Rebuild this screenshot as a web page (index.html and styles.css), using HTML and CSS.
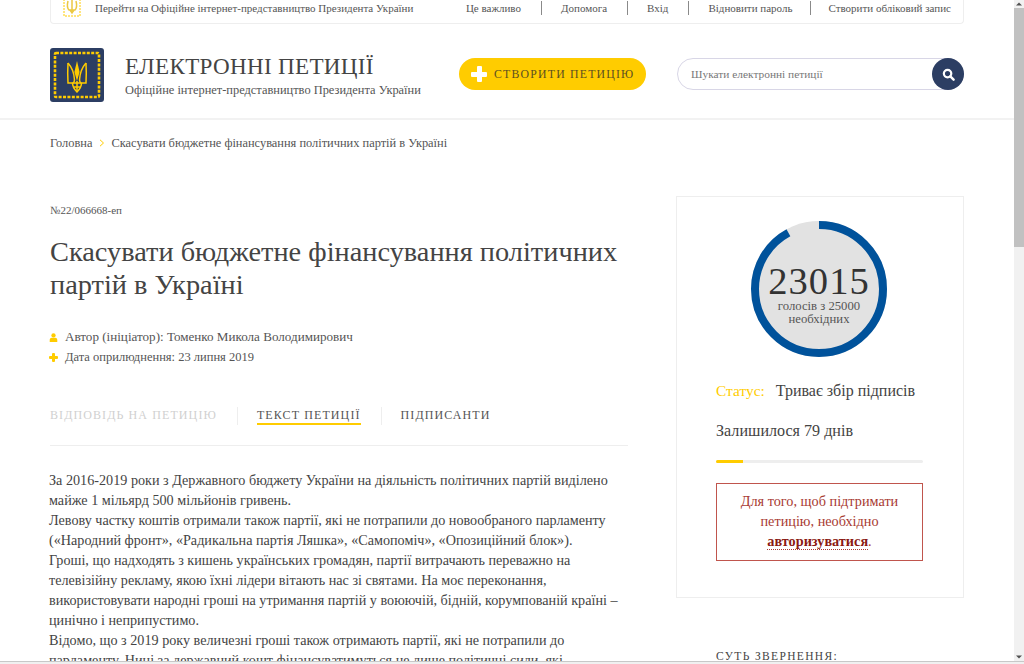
FILE: index.html
```html
<!DOCTYPE html>
<html lang="uk">
<head>
<meta charset="utf-8">
<title>Скасувати бюджетне фінансування політичних партій в Україні</title>
<link rel="stylesheet" href="styles.css">
</head>
<body>
<div class="window">
  <div class="page">
    <div class="container">
      <div class="topbar">
        <a class="topbar-home">
          <svg class="mini-logo" viewBox="0 0 18 17" aria-hidden="true">
            <path class="mini-frame" d="M1 -4V16H17V-4"/>
            <path class="mini-trident" d="M9 0V12M5 1C4 5 4 8 6 10H12C14 8 14 5 13 1M7 10L9 13L11 10"/>
          </svg>
          <span>Перейти на Офіційне інтернет-представництво Президента України</span>
        </a>
        <nav class="topnav">
          <a>Це важливо</a>
          <a>Допомога</a>
          <a>Вхід</a>
          <a>Відновити пароль</a>
          <a>Створити обліковий запис</a>
        </nav>
      </div>
    </div>

    <header class="header">
      <div class="container header-row">
        <svg class="logo" viewBox="0 0 54 54" aria-hidden="true">
          <rect width="54" height="54" rx="3" fill="#2c3e63"/>
          <rect class="logo-frame" x="5" y="5" width="44" height="44" rx="1"/>
          <g class="logo-trident">
            <path class="logo-lance" d="M27 13L29.6 24L27 33L24.4 24Z"/>
            <path d="M18 15C17.6 22 17.6 29 18 35H36C36.4 29 36.4 22 36 15"/>
            <path d="M18 15C21.5 19 24 25 24.4 31C24.6 33 24 35 22.5 35M36 15C32.5 19 30 25 29.6 31C29.4 33 30 35 31.5 35"/>
            <path d="M22.5 35C22.5 39 25 42 27 44C29 42 31.5 39 31.5 35"/>
            <path d="M23.5 39H30.5M27 33V44"/>
          </g>
        </svg>
        <div class="brand">
          <div class="brand-title">ЕЛЕКТРОННІ ПЕТИЦІЇ</div>
          <div class="brand-sub">Офіційне інтернет-представництво Президента України</div>
        </div>
        <a class="create-btn"><span class="plus plus-lg"></span>СТВОРИТИ ПЕТИЦІЮ</a>
        <div class="search">
          <span class="search-text">Шукати електронні петиції</span>
          <span class="search-btn">
            <svg viewBox="0 0 14 14" width="13" height="13" aria-hidden="true">
              <circle cx="6" cy="6" r="4" fill="none" stroke="#fff" stroke-width="2.4"/>
              <path d="M9 9L12.5 12.5" stroke="#fff" stroke-width="2.6" stroke-linecap="round"/>
            </svg>
          </span>
        </div>
      </div>
    </header>

    <div class="container">
      <div class="crumbs">
        <a>Головна</a>
        <svg class="crumb-arrow" viewBox="0 0 6 8" aria-hidden="true"><path d="M1 .8L4.5 4L1 7.2"/></svg>
        <span>Скасувати бюджетне фінансування політичних партій в Україні</span>
      </div>

      <div class="columns">
        <main class="main">
          <div class="number">№22/066668-еп</div>
          <h1 class="title">Скасувати бюджетне фінансування політичних партій в Україні</h1>
          <div class="meta">
            <div class="meta-row">
              <svg class="meta-icon" viewBox="0 0 10 10" aria-hidden="true">
                <circle cx="5" cy="2.7" r="2.4" fill="#fc0"/>
                <path d="M.8 10V7.8C.8 6.2 2 5.4 3 5.4H7C8 5.4 9.2 6.2 9.2 7.8V10Z" fill="#fc0"/>
              </svg>
              <span>Автор (ініціатор): Томенко Микола Володимирович</span>
            </div>
            <div class="meta-row meta-date">
              <span class="meta-icon plus plus-sm"></span>
              <span>Дата оприлюднення: 23 липня 2019</span>
            </div>
          </div>
          <div class="tabs">
            <a class="tab tab-muted">ВІДПОВІДЬ НА ПЕТИЦІЮ</a>
            <a class="tab tab-active">ТЕКСТ ПЕТИЦІЇ</a>
            <a class="tab">ПІДПИСАНТИ</a>
          </div>
          <div class="article">
            За 2016-2019 роки з Державного бюджету України на діяльність політичних партій виділено<br>
            майже 1 мільярд 500 мільйонів гривень.<br>
            Левову частку коштів отримали також партії, які не потрапили до новообраного парламенту<br>
            («Народний фронт», «Радикальна партія Ляшка», «Самопоміч», «Опозиційний блок»).<br>
            Гроші, що надходять з кишень українських громадян, партії витрачають переважно на<br>
            телевізійну рекламу, якою їхні лідери вітають нас зі святами. На моє переконання,<br>
            використовувати народні гроші на утримання партій у воюючій, бідній, корумпованій країні –<br>
            цинічно і неприпустимо.<br>
            Відомо, що з 2019 року величезні гроші також отримають партії, які не потрапили до<br>
            парламенту. Нині за державний кошт фінансуватимуться не лише політичні сили, які
          </div>
        </main>

        <aside class="side">
          <div class="card">
            <div class="gauge">
              <svg class="gauge-ring" viewBox="0 0 136 136" aria-hidden="true">
                <circle cx="68" cy="68" r="68" fill="#e2e2e2"/>
                <circle class="gauge-arc" cx="68" cy="68" r="64" pathLength="100" stroke-dasharray="92.06 100" transform="rotate(-90 68 68)"/>
              </svg>
              <div class="gauge-text">
                <div class="gauge-num">23015</div>
                <div class="gauge-label">голосів з 25000<br>необхідних</div>
              </div>
            </div>
            <div class="status"><span class="status-key">Статус:</span><span>Триває збір підписів</span></div>
            <div class="remain">Залишилося 79 днів</div>
            <div class="bar"><div class="bar-fill"></div></div>
            <div class="notice">Для того, щоб підтримати петицію, необхідно <a class="notice-link">авторизуватися</a>.</div>
          </div>
          <div class="side-heading">СУТЬ ЗВЕРНЕННЯ:</div>
        </aside>
      </div>
    </div>
  </div>
  <div class="scrollbar">
    <svg class="sb-arrow" viewBox="0 0 10 8" aria-hidden="true"><path d="M5 2.5L8 5.5H2Z"/></svg>
    <div class="sb-thumb"></div>
    <div class="sb-track"></div>
    <svg class="sb-arrow" viewBox="0 0 10 8" aria-hidden="true"><path d="M5 5.5L8 2.5H2Z"/></svg>
  </div>
</div>
</body>
</html>
```

FILE: styles.css
```css
* { box-sizing: border-box; }
html, body { margin: 0; height: 664px; overflow: hidden; background: #f0f0f0; }
body { font-family: "Liberation Serif", "Noto Sans CJK SC", serif; color: #444; }

.window { display: flex; height: 661px; overflow: hidden; background: #fff; box-shadow: 0 1px 0 #c8c8c8; }
.page { width: 1014px; flex: none; overflow: hidden; }
.container { width: 914px; margin-left: 50px; }

.scrollbar { width: 10px; flex: none; display: flex; flex-direction: column; background: #f1f1f1; }
.sb-arrow { display: block; width: 10px; height: 8px; flex: none; fill: #505050; }
.sb-thumb { height: 239px; background: #c1c1c1; flex: none; }
.sb-track { flex: 1; }

.topbar { height: 24px; display: flex; justify-content: space-between; border: 1px solid #eee; border-top: 0; border-radius: 0 0 4px 4px; font-size: 11px; color: #555; white-space: nowrap; }
.topbar-home { display: flex; gap: 14px; margin-left: 12px; height: 17px; align-items: center; padding-bottom: 2px; }
.mini-logo { width: 18px; height: 17px; flex: none; margin-bottom: -2px; }
.mini-frame { fill: none; stroke: #fc0; stroke-width: 1; stroke-dasharray: 2 1; }
.mini-trident { fill: none; stroke: #ebc843; stroke-width: 1.5; }
.topnav { display: flex; height: 15px; margin-right: 12px; align-items: center; }
.topnav a { padding: 0 19.5px; line-height: 14px; border-left: 1px solid #8a8a8a; }
.topnav a:first-child { border-left: 0; }
.topnav a:last-child { padding-left: 17.5px; padding-right: 0; margin-left: -2px; }

.header { border-bottom: 2px solid #f2f2f2; height: 97px; margin-top: -1px; }
.header-row { display: flex; align-items: flex-start; padding-top: 25px; }
.logo { width: 54px; height: 54px; flex: none; }
.logo-frame { fill: none; stroke: #fc0; stroke-width: 2.6; stroke-dasharray: 3 1.4; }
.logo-trident { fill: none; stroke: #fc0; stroke-width: 1.5; }
.logo-lance { fill: #fc0; stroke: none; }
.brand { margin-left: 21px; width: 334px; flex: none; }
.brand-title { font-size: 23.1px; line-height: 28px; margin-top: 4px; letter-spacing: .3px; color: #444; white-space: nowrap; }
.brand-sub { font-size: 12.42px; line-height: 16px; margin-top: 2px; white-space: nowrap; color: #555; }
.create-btn { width: 187px; height: 32px; margin-top: 10px; border-radius: 16px; background: #fc0; display: flex; align-items: center; padding-left: 12px; font-size: 11.8px; letter-spacing: 1.2px; color: #5c5020; white-space: nowrap; }
.plus { position: relative; display: inline-block; flex: none; }
.plus::before, .plus::after { content: ""; position: absolute; background: currentColor; border-radius: 1px; }
.plus-lg { width: 16px; height: 16px; color: #fff; margin-right: 7px; }
.plus-lg::before { left: 5.5px; top: 0; width: 5px; height: 16px; }
.plus-lg::after { left: 0; top: 5.5px; width: 16px; height: 5px; }
.search { width: 287px; height: 32px; margin-top: 10px; margin-left: 31px; border: 1px solid #d8d6e6; border-radius: 16px; display: flex; align-items: center; justify-content: space-between; }
.search-text { margin-left: 13px; font-size: 11.4px; color: #777; }
.search-btn { width: 32px; height: 32px; margin-right: -1px; border-radius: 50%; background: #2c3e63; display: flex; align-items: center; justify-content: center; }

.crumbs { display: flex; align-items: center; height: 16px; margin-top: 15px; font-size: 12.4px; color: #555; }
.crumb-arrow { width: 6px; height: 8px; margin: 0 6.5px; fill: none; stroke: #fc0; stroke-width: 1; }

.columns { display: flex; justify-content: space-between; margin-top: 45px; }
.main { width: 578px; flex: none; }
.number { font-size: 11px; line-height: 16px; margin-top: 6px; color: #555; }
.title { margin: 17px 0 0; font-size: 28.35px; line-height: 33px; font-weight: 400; color: #444; }
.meta { margin-top: 26px; font-size: 13.1px; color: #555; }
.meta-date { font-size: 12.5px; }
.meta-row { display: flex; align-items: center; height: 20px; gap: 7px; margin-left: -1px; }
.meta-icon { width: 9px; height: 9px; flex: none; }
.plus-sm { color: #fc0; }
.plus-sm::before { left: 3px; top: 0; width: 3px; height: 9px; }
.plus-sm::after { left: 0; top: 3px; width: 9px; height: 3px; }

.tabs { display: flex; align-items: flex-start; margin-top: 40px; height: 39px; border-bottom: 1px solid #eee; font-size: 12px; letter-spacing: 1.1px; color: #555; }
.tab { height: 18px; line-height: 16px; border-left: 1px solid #eee; margin-left: 20px; padding-left: 19px; white-space: nowrap; position: relative; }
.tab:first-child { border-left: 0; margin-left: 0; padding-left: 0; }
.tab-muted { color: #d0d0d0; }
.tab-active::after { content: ""; position: absolute; left: 19px; right: 0; bottom: 0; height: 2px; background: #fc0; }

.article { margin-top: 24px; font-size: 14.18px; line-height: 20px; color: #444; white-space: nowrap; margin-left: -1px; }

.side { width: 288px; flex: none; }
.card { height: 402px; border: 1px solid #eee; padding: 24px 40px 0 39px; }
.gauge { position: relative; width: 136px; height: 136px; margin-left: 35px; }
.gauge-ring { display: block; width: 136px; height: 136px; }
.gauge-arc { fill: none; stroke: #00529b; stroke-width: 8; }
.gauge-text { position: absolute; left: 0; right: 0; top: 42px; text-align: center; }
.gauge-num { font-size: 38.6px; line-height: 36px; letter-spacing: 1px; color: #333; }
.gauge-label { font-size: 12.7px; line-height: 13px; color: #555; margin-top: 1px; }
.status { margin-top: 25px; display: flex; gap: 11px; font-size: 16px; line-height: 18px; color: #444; }
.status-key { color: #fc0; font-size: 15.4px; }
.remain { margin-top: 22px; font-size: 16.1px; line-height: 18px; }
.bar { margin-top: 20px; height: 3px; background: #eee; border-radius: 2px; overflow: hidden; }
.bar-fill { width: 27px; height: 3px; background: #fc0; }
.notice { margin-top: 20px; height: 78px; border: 1px solid #c0554d; padding: 7px 20px 0; text-align: center; font-size: 14.25px; line-height: 20px; color: #a83a32; }
.notice-link { font-weight: 700; color: #8b1a12; border-bottom: 1px dotted #a83a32; }
.side-heading { margin-top: 50px; margin-left: 40px; font-size: 11.5px; line-height: 16px; letter-spacing: 1.35px; color: #444; }
```
